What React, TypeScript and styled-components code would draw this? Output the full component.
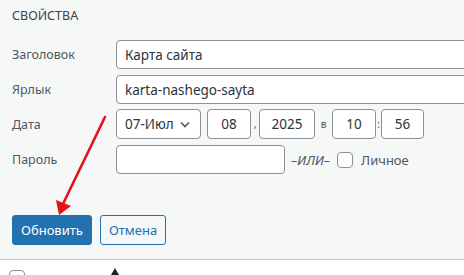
import React from "react";
import styled, { createGlobalStyle } from "styled-components";

const GlobalStyle = createGlobalStyle`
  html, body {
    margin: 0;
    padding: 0;
    overflow: hidden;
    background: #ffffff;
  }
  body {
    font-family: "Noto Sans", "Open Sans", sans-serif;
    color: #3c434a;
  }
`;

const Page = styled.div`
  position: relative;
  width: 464px;
  height: 275px;
  overflow: hidden;
`;

const Panel = styled.section`
  background: #f6f7f7;
  padding: 0 0 14px 12px;
  border-bottom: 1px solid #c3c4c7;
`;

const Legend = styled.header`
  height: 40px;
  padding-top: 6px;
  box-sizing: border-box;
  font-size: 12.5px;
  line-height: 20px;
  text-transform: uppercase;
  color: #3c434a;
`;

const Fields = styled.div`
  display: flex;
  flex-direction: column;
`;

const Row = styled.div<{ $gap?: number }>`
  display: flex;
  align-items: center;
  margin-bottom: ${(p) => p.$gap ?? 6}px;
`;

const Label = styled.label`
  flex: 0 0 104px;
  font-size: 12.5px;
  color: #50575e;
`;

const Input = styled.input<{ $w?: number; $h?: number }>`
  box-sizing: border-box;
  width: ${(p) => (p.$w ? `${p.$w}px` : "360px")};
  height: ${(p) => p.$h ?? 29}px;
  flex: none;
  padding: 0 8px;
  border: 1px solid #8c8f94;
  border-radius: 4px;
  background: #fff;
  font-family: inherit;
  font-size: 13.5px;
  color: #2c3338;
  text-align: ${(p) => (p.$w && p.$w < 70 ? "center" : "left")};
  outline: none;
`;

const Select = styled.div`
  box-sizing: border-box;
  width: 85px;
  height: 30px;
  display: flex;
  align-items: center;
  justify-content: space-between;
  padding: 0 10px 0 8px;
  border: 1px solid #8c8f94;
  border-radius: 4px;
  background: #fff;
  font-size: 13.5px;
  color: #2c3338;
`;

const Sep = styled.span<{ $w: number }>`
  width: ${(p) => p.$w}px;
  text-align: center;
  font-size: 10px;
  color: #50575e;
`;

const Or = styled.span`
  margin-left: 6px;
  font-size: 13px;
  color: #50575e;
  font-style: italic;
`;

const Check = styled.span`
  box-sizing: border-box;
  width: 16px;
  height: 16px;
  margin: 0 8px 0 7px;
  border: 1px solid #8c8f94;
  border-radius: 4px;
  background: #fff;
`;

const CheckText = styled.span`
  font-size: 13px;
  color: #50575e;
`;

const Actions = styled.div`
  display: flex;
  gap: 8px;
  margin-top: 41px;
`;

const Button = styled.button<{ $primary?: boolean }>`
  height: 30px;
  padding: 0 8px;
  border-radius: 3px;
  border: 1px solid #2271b1;
  background: ${(p) => (p.$primary ? "#2271b1" : "#f6f7f7")};
  color: ${(p) => (p.$primary ? "#fff" : "#2271b1")};
  font-family: inherit;
  font-size: 13px;
`;

const ListHead = styled.div`
  display: flex;
  align-items: flex-start;
  padding: 10px 0 0 9px;
  background: #fff;
`;

const HeadCheck = styled.span`
  box-sizing: border-box;
  width: 16px;
  height: 16px;
  border: 1px solid #8c8f94;
  border-radius: 4px;
`;

const HeadTitle = styled.span`
  width: 74px;
  margin: 3px 0 0 15px;
  font-size: 13px;
  line-height: 14px;
  color: #50575e;
`;

const SortArrow = styled.span`
  margin: -2px 0 0 -3px;
  width: 0;
  height: 0;
  border-left: 4px solid transparent;
  border-right: 4px solid transparent;
  border-bottom: 7px solid #1d2327;
`;

const Overlay = styled.svg`
  position: absolute;
  left: 0;
  top: 0;
  pointer-events: none;
`;

const Chevron = () => (
  <svg width="10" height="7" viewBox="0 0 10 7">
    <path d="M1 1.5 L5 5.5 L9 1.5" fill="none" stroke="#50575e" strokeWidth="1.6" />
  </svg>
);

export default function App() {
  return (
    <Page>
      <GlobalStyle />
      <Panel>
        <Legend>Свойства</Legend>
        <Fields>
          <Row>
            <Label>Заголовок</Label>
            <Input defaultValue="Карта сайта" />
          </Row>
          <Row $gap={5}>
            <Label>Ярлык</Label>
            <Input defaultValue="karta-nashego-sayta" />
          </Row>
          <Row $gap={6}>
            <Label>Дата</Label>
            <Select>
              07-Июл
              <Chevron />
            </Select>
            <Sep $w={6} />
            <Input $w={44} $h={30} defaultValue="08" />
            <Sep $w={8}>,</Sep>
            <Input $w={56} $h={30} defaultValue="2025" />
            <Sep $w={17}>в</Sep>
            <Input $w={44} $h={30} defaultValue="10" />
            <Sep $w={5}>:</Sep>
            <Input $w={43} $h={30} defaultValue="56" />
          </Row>
          <Row $gap={0}>
            <Label>Пароль</Label>
            <Input $w={169} />
            <Or>–ИЛИ–</Or>
            <Check />
            <CheckText>Личное</CheckText>
          </Row>
        </Fields>
        <Actions>
          <Button $primary>Обновить</Button>
          <Button>Отмена</Button>
        </Actions>
      </Panel>
      <ListHead>
        <HeadCheck />
        <HeadTitle>Заголовок</HeadTitle>
        <SortArrow />
      </ListHead>
      <Overlay width="464" height="275">
        <line x1="105" y1="117" x2="62" y2="206" stroke="#e3121a" strokeWidth="2.6" strokeLinecap="round" />
        <polygon points="59,215 56,200 71,206" fill="#e3121a" />
      </Overlay>
    </Page>
  );
}
